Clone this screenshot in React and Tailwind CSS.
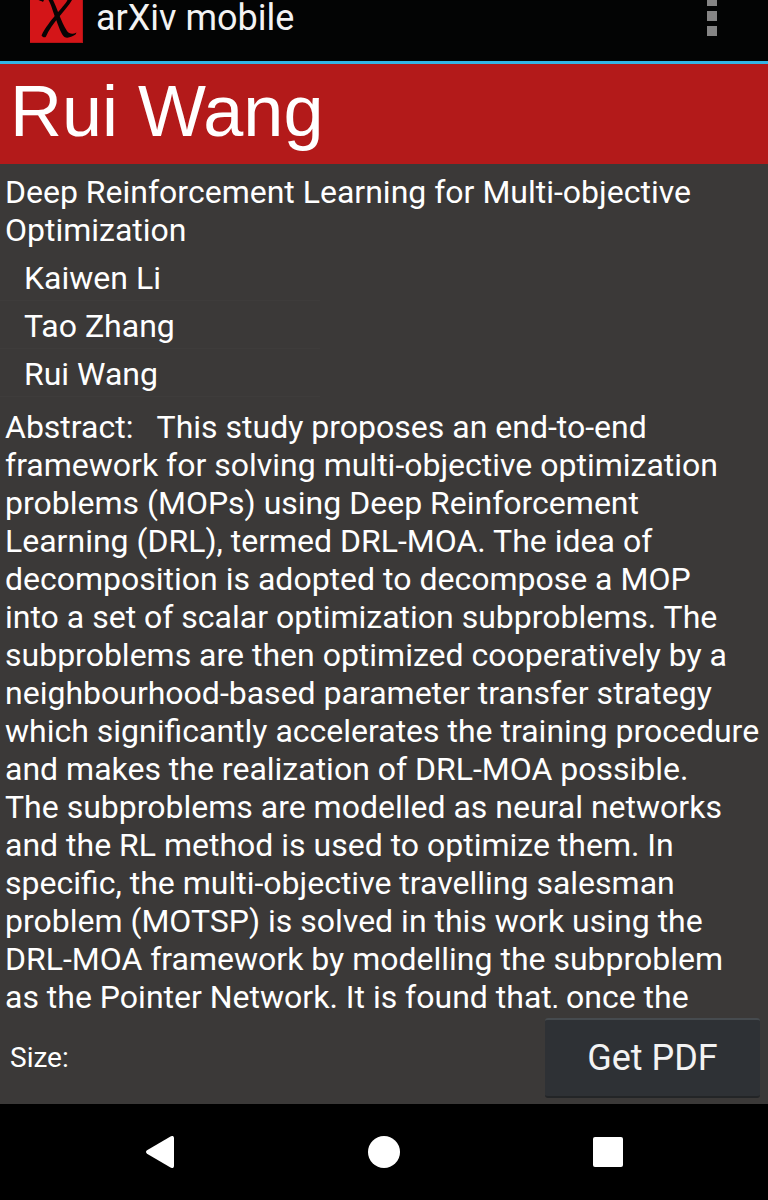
const authors = ["Kaiwen Li", "Tao Zhang", "Rui Wang"];

function Logo() {
  return (
    <svg className="h-[43px] w-[53px]" viewBox="0 0 53 43" aria-hidden="true">
      <rect width="53" height="43" fill="#d41518" />
      <path d="M0 42.5H53M52.5 0V43" stroke="#b51215" fill="none" />
      <path
        d="M8.5 0C10 1.200 11.5 0.600 13 2L14 0ZM18.500 0C21 4 23 12 25.500 18C28.500 26 31 34 34.500 37C38 39 43 36 45.500 34.500L46.500 32.500C43 34.500 39 34 37 31C33.500 26 31.500 20 29 14.500C27 9 24.500 3 23 0Z"
        fill="#080404"
      />
      <path
        d="M37.500 0C34 7 19 20 11.500 35.500C13 37.500 15 38 16 36.500C21 24 37 9 42 0Z"
        fill="#080404"
      />
    </svg>
  );
}

export default function App() {
  return (
    <div className="flex h-screen flex-col bg-[#3b3938] font-['Roboto',sans-serif] text-white">
      <header className="flex h-16 shrink-0 items-start justify-between border-b-3 border-[#33b5e5] bg-[#030404] pr-[51px] pl-[30px]">
        <div className="flex items-start gap-[13px]">
          <Logo />
          <span className="text-4xl leading-9 text-[#f3f3f3]">arXiv mobile</span>
        </div>
        <button type="button" aria-label="More options" className="block">
          <svg className="h-9 w-[10px]" viewBox="0 0 10 36" fill="#858585" aria-hidden="true">
            <path d="M0 0h10v6H0zM0 11h10v10H0zM0 26h10v10H0z" />
          </svg>
        </button>
      </header>

      <h1 className="flex h-[100px] shrink-0 items-center bg-[#b31a1a] px-[10px] pb-[6px] font-['Liberation_Sans',sans-serif] text-[72px] leading-[80px]">
        Rui Wang
      </h1>

      <main className="min-h-0 flex-1 overflow-y-auto pt-[9px] text-[32px] leading-[38px] [scrollbar-width:none]">
        <h2 className="px-[5px]">Deep Reinforcement Learning for Multi-objective Optimization</h2>
        <ul className="mt-1 w-80 max-w-full">
          {authors.map((name) => (
            <li key={name} className="h-12 border-b border-[#3e3c3b] px-6 pt-[6px]">
              {name}
            </li>
          ))}
        </ul>
        <p className="mt-[11px] px-[5px]">
          Abstract: &nbsp; This study proposes an end-to-end framework for solving multi-objective
          optimization problems (MOPs) using Deep Reinforcement Learning (DRL), termed DRL-MOA. The
          idea of decomposition is adopted to decompose a MOP
          <br />
          into a set of scalar optimization subproblems. The subproblems are then optimized
          cooperatively by a neighbourhood-based parameter transfer strategy which significantly
          accelerates the training procedure and makes the realization of DRL-MOA possible.
          <br />
          The subproblems are modelled as neural networks and the RL method is used to optimize
          them. In specific, the multi-objective travelling salesman problem (MOTSP) is solved in
          this work using the DRL-MOA framework by modelling the subproblem
          <br />
          as the Pointer Network. It is found that, once the
        </p>
      </main>

      <footer className="flex h-24 shrink-0 items-center justify-between pt-1 pr-2 pl-[10px]">
        <span className="text-[28px] leading-8">Size:</span>
        <button
          type="button"
          className="h-20 w-[215px] rounded-[3px] border-t-2 border-b-2 border-t-[#464b4f] border-b-[#232527] bg-[#2e3135] text-4xl text-[#f3f3f3]"
        >
          Get PDF
        </button>
      </footer>

      <nav className="flex h-24 shrink-0 items-center justify-center gap-32 bg-black" aria-label="System navigation">
        <button type="button" aria-label="Back" className="flex w-24 justify-center">
          <svg className="size-8" viewBox="0 0 32 32" fill="white" aria-hidden="true">
            <path d="M3 14.300L26.500 0.400Q30 -1 30 2V30Q30 33 26.500 31.600L3 17.700Q1 16 3 14.300Z" />
          </svg>
        </button>
        <button type="button" aria-label="Home" className="flex w-24 justify-center">
          <svg className="size-8" viewBox="0 0 32 32" fill="white" aria-hidden="true">
            <circle cx="16" cy="16" r="16" />
          </svg>
        </button>
        <button type="button" aria-label="Recent apps" className="flex w-24 justify-center">
          <svg className="size-8" viewBox="0 0 32 32" fill="white" aria-hidden="true">
            <rect x="1" y="1" width="30" height="30" rx="2" />
          </svg>
        </button>
      </nav>
    </div>
  );
}
